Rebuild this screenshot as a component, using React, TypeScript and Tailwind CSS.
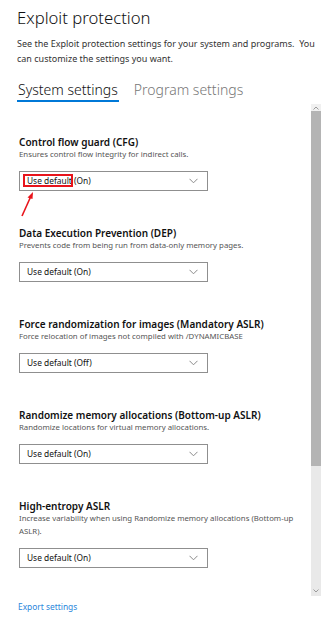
import React from "react";

type Setting = {
  title: string;
  desc: string;
  value: string;
  marked?: boolean;
};

const settings: Setting[] = [
  {
    title: "Control flow guard (CFG)",
    desc: "Ensures control flow integrity for indirect calls.",
    value: "Use default (On)",
    marked: true,
  },
  {
    title: "Data Execution Prevention (DEP)",
    desc: "Prevents code from being run from data-only memory pages.",
    value: "Use default (On)",
  },
  {
    title: "Force randomization for images (Mandatory ASLR)",
    desc: "Force relocation of images not compiled with /DYNAMICBASE",
    value: "Use default (Off)",
  },
  {
    title: "Randomize memory allocations (Bottom-up ASLR)",
    desc: "Randomize locations for virtual memory allocations.",
    value: "Use default (On)",
  },
  {
    title: "High-entropy ASLR",
    desc: "Increase variability when using Randomize memory allocations (Bottom\u2011up ASLR).",
    value: "Use default (On)",
  },
];

function Chevron() {
  return (
    <svg width="9" height="6" viewBox="0 0 9 6" fill="none">
      <path d="M0.5 0.8 L4.5 4.8 L8.5 0.8" stroke="#8a8a8a" strokeWidth="1" />
    </svg>
  );
}

function Dropdown({ value, marked }: { value: string; marked?: boolean }) {
  // split so the first words can carry the red annotation box
  const inner = value.replace("Use default", "");
  return (
    <div className="relative mt-[10px] flex h-[20px] w-[189px] items-center justify-between border border-[#8f8f8f] pl-[7px] pr-[9px]">
      <span className="text-[8.4px] leading-[12px] text-[#111]">
        {marked ? (
          <span className="relative">
            Use default
            <span className="absolute -left-[4px] -right-[1px] -top-[1px] -bottom-[1px] border-2 border-[#e8141b]" />
          </span>
        ) : (
          "Use default"
        )}
        {inner}
      </span>
      <Chevron />
    </div>
  );
}

function Scrollbar() {
  return (
    <div className="mr-[5px] flex w-[10px] flex-col bg-[#e9e9e9]">
      <div className="flex h-[7px] items-center justify-center bg-[#f0f0f0]">
        <svg width="6" height="4" viewBox="0 0 6 4">
          <path d="M0.5 3.5 L3 1 L5.5 3.5" stroke="#9a9a9a" strokeWidth="1" fill="none" />
        </svg>
      </div>
      <div className="h-[355px] bg-[#b4b4b4]" />
      <div className="flex-1" />
      <div className="flex h-[10px] items-center justify-center">
        <svg width="6" height="4" viewBox="0 0 6 4">
          <path d="M0.5 0.5 L3 3 L5.5 0.5" stroke="#9a9a9a" strokeWidth="1" fill="none" />
        </svg>
      </div>
    </div>
  );
}

export default function App() {
  return (
    <div
      className="relative h-[636px] w-[326px] overflow-hidden bg-white"
      style={{ fontFamily: '"Noto Sans", "Open Sans", sans-serif' }}
    >
      <div className="pl-[17px] pt-[8px]">
        <h1 className="text-[16.7px] font-light leading-[20px] text-[#111]">Exploit protection</h1>
        <p className="mt-[8px] pr-[8px] text-[9px] leading-[15px] text-[#333]">
          See the Exploit protection settings for your system and programs.&nbsp; You can customize the settings you want.
        </p>
        <div className="mt-[14px] flex gap-[15px] text-[14px] font-light leading-[20px]">
          <div className="flex flex-col">
            <span className="px-[1px] text-[#111]">System settings</span>
            <div className="h-[2px] bg-[#0078d7]" />
          </div>
          <span className="text-[#777]">Program settings</span>
        </div>
      </div>

      <div className="mt-[2px] flex h-[492px]">
        <div className="flex-1 overflow-hidden pl-[19px] pt-[32px]">
          <div className="flex flex-col gap-[36px]">
            {settings.map((s) => (
              <div key={s.title} className="flex flex-col">
                <div className="text-[10px] font-semibold leading-[12px] text-[#111]">{s.title}</div>
                <div className="text-[7.8px] leading-[13px] text-[#555]">{s.desc}</div>
                <Dropdown value={s.value} marked={s.marked} />
              </div>
            ))}
          </div>
        </div>
        <Scrollbar />
      </div>

      <div className="pl-[18px] pt-[5px] text-[8.4px] leading-[12px] text-[#2a86db]">Export settings</div>

      {/* red annotation arrow */}
      <svg className="absolute left-[18px] top-[190px]" width="20" height="28" viewBox="0 0 20 28">
        <path d="M4 26 L13 6" stroke="#e8141b" strokeWidth="1.6" />
        <path d="M15 2 L9.5 7.5 L14.5 9 Z" fill="#e8141b" />
      </svg>
    </div>
  );
}
